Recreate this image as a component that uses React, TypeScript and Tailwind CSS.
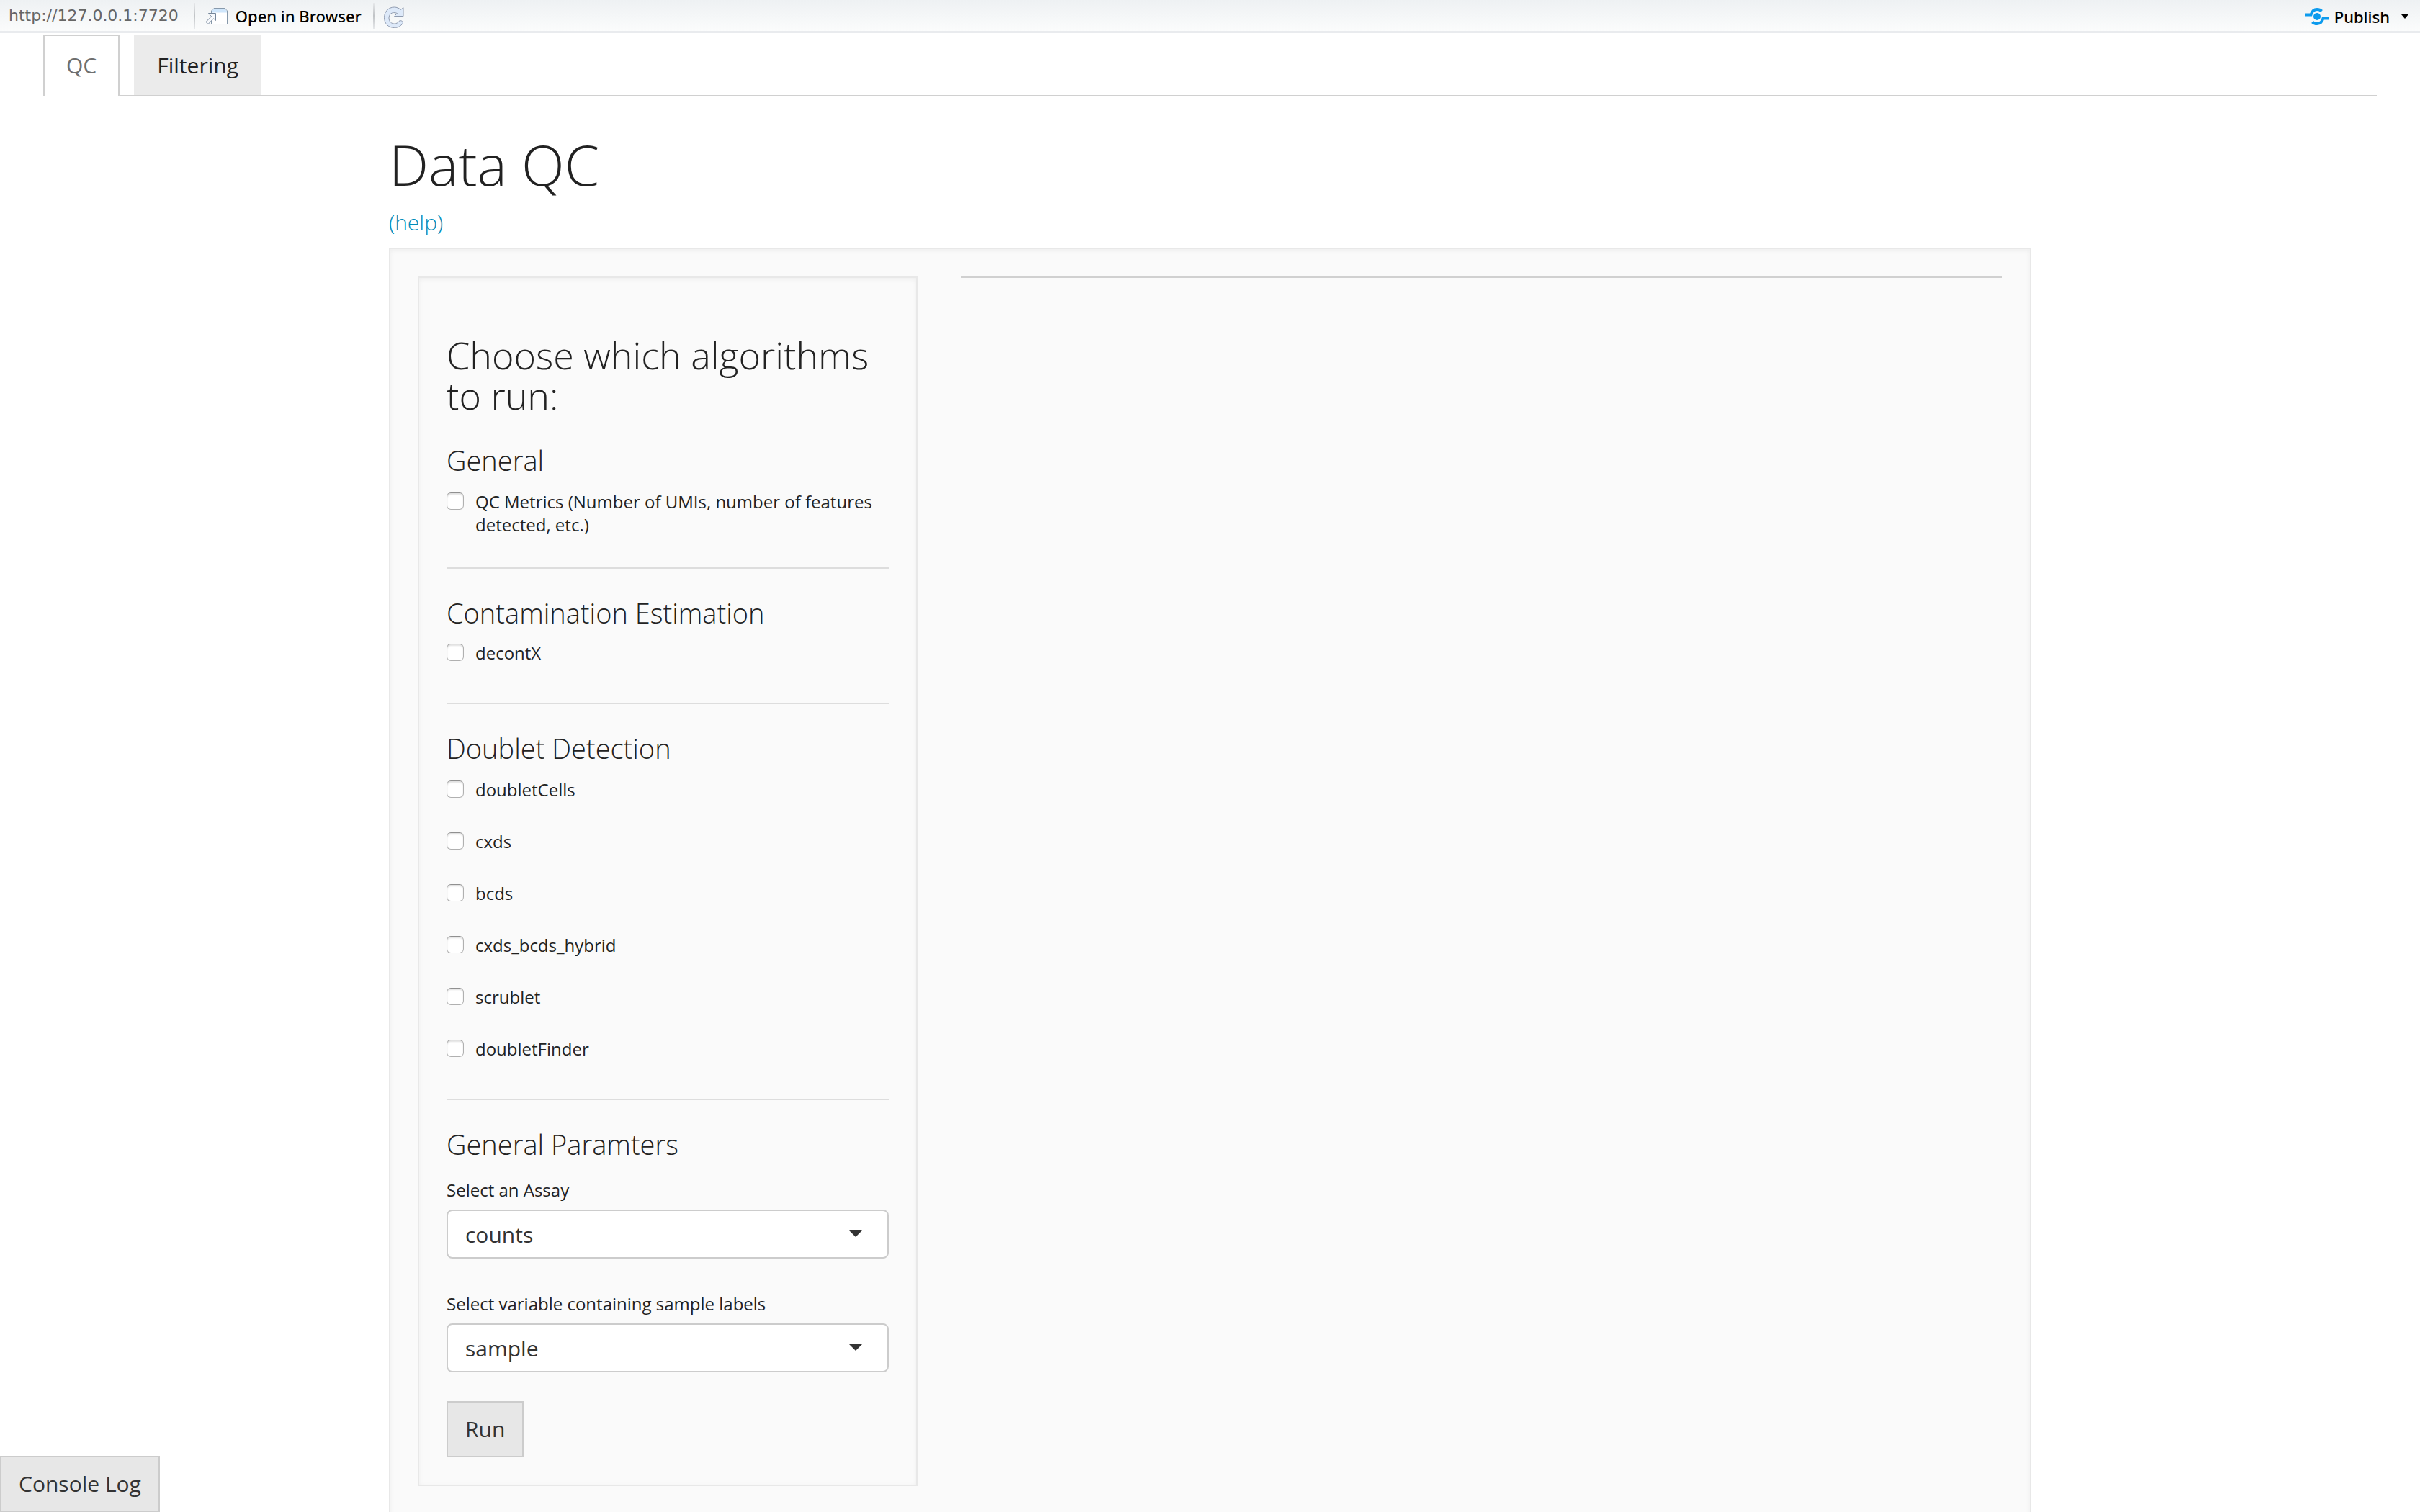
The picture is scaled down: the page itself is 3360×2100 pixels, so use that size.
import React from "react";

const sections = [
  {
    title: "General",
    options: ["QC Metrics (Number of UMIs, number of features detected, etc.)"],
    listClass: "mt-[21px] mb-[43px]",
  },
  { title: "Contamination Estimation", options: ["decontX"], listClass: "mt-[19px] mb-[53px]" },
  {
    title: "Doublet Detection",
    options: ["doubletCells", "cxds", "bcds", "cxds_bcds_hybrid", "scrublet", "doubletFinder"],
    listClass: "mt-[21px] mb-[53px]",
  },
];

const panel = "border-2 border-[#e8e8e8] bg-[#fafafa] shadow-[inset_0_2px_6px_rgba(0,0,0,0.05)]";

function Option({ label }: { label: string }) {
  return (
    <label className="flex items-start gap-4 text-2xl leading-8">
      <input
        type="checkbox"
        className="mt-[3px] size-6 shrink-0 appearance-none rounded-md border border-[#b0b0b0] border-t-[#909090] bg-white shadow-[inset_0_2px_2px_rgba(0,0,0,0.12)] checked:bg-[#008cba]"
      />
      <span>{label}</span>
    </label>
  );
}

function Picker({ id, label, value }: { id: string; label: string; value: string }) {
  return (
    <div className="flex flex-col gap-[11px]">
      <label htmlFor={id} className="text-2xl leading-8">{label}</label>
      <div className="relative">
        <select
          id={id}
          defaultValue={value}
          className="block h-[68px] w-full appearance-none rounded-lg border-2 border-[#cccccc] bg-white px-6 pt-0.5 text-[30px] leading-10 text-[#333333]"
        >
          <option>{value}</option>
        </select>
        <svg viewBox="0 0 20 10" className="pointer-events-none absolute right-9 top-7 h-[10px] w-5" aria-hidden="true">
          <path d="M0 0H20L10 10Z" fill="#333" />
        </svg>
      </div>
    </div>
  );
}

function OpenIcon() {
  return (
    <svg viewBox="0 0 32 26" className="h-[26px] w-8" aria-hidden="true">
      <path d="M8.500 8V6L12 2.500H27L30.500 6V24.500H8.500Z" fill="#fff" stroke="#8799ab" />
      <path d="M9 8.500V6.200L12.200 3H26.800L30 6.200V8.500Z" fill="#cfe6fb" />
      <path d="M4.500 9.500H14.500V19.500L11.500 16.800L4 24.500L1 21.500L8.500 13.800Z" fill="#f7f9fc" stroke="#75869a" strokeLinejoin="round" />
    </svg>
  );
}

function ReloadIcon() {
  return (
    <svg viewBox="0 0 30 32" className="h-8 w-[30px]" aria-hidden="true">
      <path
        d="M28 2.500V14.500H15.500L19.500 10.500C12 7.500 8 12 8 17C8 22.500 12 25 15.500 25C18.500 25 20.500 23.500 22 21.500C24 19.500 28.500 21.500 27 24.500C24.500 28.500 20.500 30.500 15.500 30.500C7 30.500 1.500 24.500 1.500 16.500C1.500 8 7.500 2 15.500 2C19 2 22 3.500 24.500 5.500Z"
        fill="#dde9f9"
        stroke="#8f9bb0"
        strokeLinejoin="round"
      />
    </svg>
  );
}

function PublishIcon() {
  return (
    <svg viewBox="0 0 32 26" className="h-[26px] w-8" aria-hidden="true">
      <circle cx="16" cy="13" r="5" fill="#0c9bee" />
      <path d="M0 10.500H7.500C9 5.500 12 3 16 3C19 3 21 4 22.500 5.500M32 15.500H24.500C23 20.500 20 23 16 23C13 23 11 22 9.500 20.500" fill="none" stroke="#0c9bee" strokeWidth="4" />
    </svg>
  );
}

export default function App() {
  return (
    <div className="min-h-screen overflow-hidden bg-white font-['Open_Sans',sans-serif] text-[#222222]">
      <header className="flex h-[46px] items-center border-b-[3px] border-[#e9ebee] bg-linear-to-b from-[#eef1f3] to-[#fbfcfc] pl-3 font-['Noto_Sans','Open_Sans',sans-serif] text-[22px] leading-7 text-black">
        <span className="font-['DejaVu_Sans',sans-serif] text-[#666666]">http://127.0.0.1:7720</span>
        <span className="ml-[21px] h-9 w-0.5 bg-linear-to-b from-[#e6e8ea] via-[#c0c3c6] to-[#e6e8ea]" />
        <button className="ml-[14px] flex items-center gap-[10px] font-medium"><OpenIcon />Open in Browser</button>
        <span className="ml-4 h-9 w-0.5 bg-linear-to-b from-[#e6e8ea] via-[#c0c3c6] to-[#e6e8ea]" />
        <button aria-label="Reload" className="ml-3 pt-1"><ReloadIcon /></button>
        <button className="ml-auto mr-4 flex items-center gap-2 pt-[3px] font-medium">
          <PublishIcon />Publish
          <svg viewBox="0 0 10 6" className="ml-2 h-[6px] w-[10px]" aria-hidden="true"><path d="M0 0H10L5 6Z" fill="#000" /></svg>
        </button>
      </header>

      <nav className="mx-[60px] mt-0.5 flex text-[30px] leading-[42px]">
        <a href="#qc" className="border-2 border-b-0 border-[#d0d0d0] px-[30px] pb-[22px] pt-5 text-[#6f6f6f]">QC</a>
        <span className="w-5 border-b-2 border-[#d0d0d0]" />
        <a href="#filtering" className="border-b-2 border-[#d0d0d0] bg-[#ebebeb] px-8 pb-5 pt-[22px]">Filtering</a>
        <span className="flex-1 border-b-2 border-[#d0d0d0]" />
      </nav>

      <main className="mx-auto mt-[51px] max-w-[2280px]">
        <h1 className="text-[78px] font-light leading-[86px]">Data QC</h1>
        <p className="mt-[22px] text-[30px] font-light leading-8"><a href="#help" className="text-[#008cba]">(help)</a></p>
        <div className={`mt-[19px] flex gap-[60px] px-[38px] pb-24 pt-[38px] ${panel}`}>
          <form className={`w-[694px] shrink-0 px-[38px] pb-[38px] pt-[79px] ${panel}`}>
            <h2 className="mb-[41px] text-[52px] font-light leading-14">Choose which algorithms to run:</h2>
            {sections.map((s) => (
              <section key={s.title}>
                <h3 className="text-[38px] font-light leading-[42px]">{s.title}</h3>
                <div className={`flex flex-col gap-10 ${s.listClass}`}>
                  {s.options.map((o) => <Option key={o} label={o} />)}
                </div>
                <hr className="mb-10 border-t-2 border-[#dddddd]" />
              </section>
            ))}
            <h3 className="mb-[27px] text-[38px] font-light leading-[42px]">General Paramters</h3>
            <div className="flex flex-col gap-[47px]">
              <Picker id="assay" label="Select an Assay" value="counts" />
              <Picker id="sample" label="Select variable containing sample labels" value="sample" />
            </div>
            <button type="button" className="mt-10 h-[78px] border-2 border-[#cccccc] bg-[#e7e7e7] px-6 text-[30px] leading-10 text-[#333333]">Run</button>
          </form>
          <div className="flex-1"><hr className="border-t-2 border-[#d0d0d0]" /></div>
        </div>
      </main>

      <button className="fixed bottom-0 left-0 h-[78px] border-2 border-[#cccccc] bg-[#e7e7e7] px-6 text-[30px] leading-10 text-[#333333]">Console Log</button>
    </div>
  );
}
